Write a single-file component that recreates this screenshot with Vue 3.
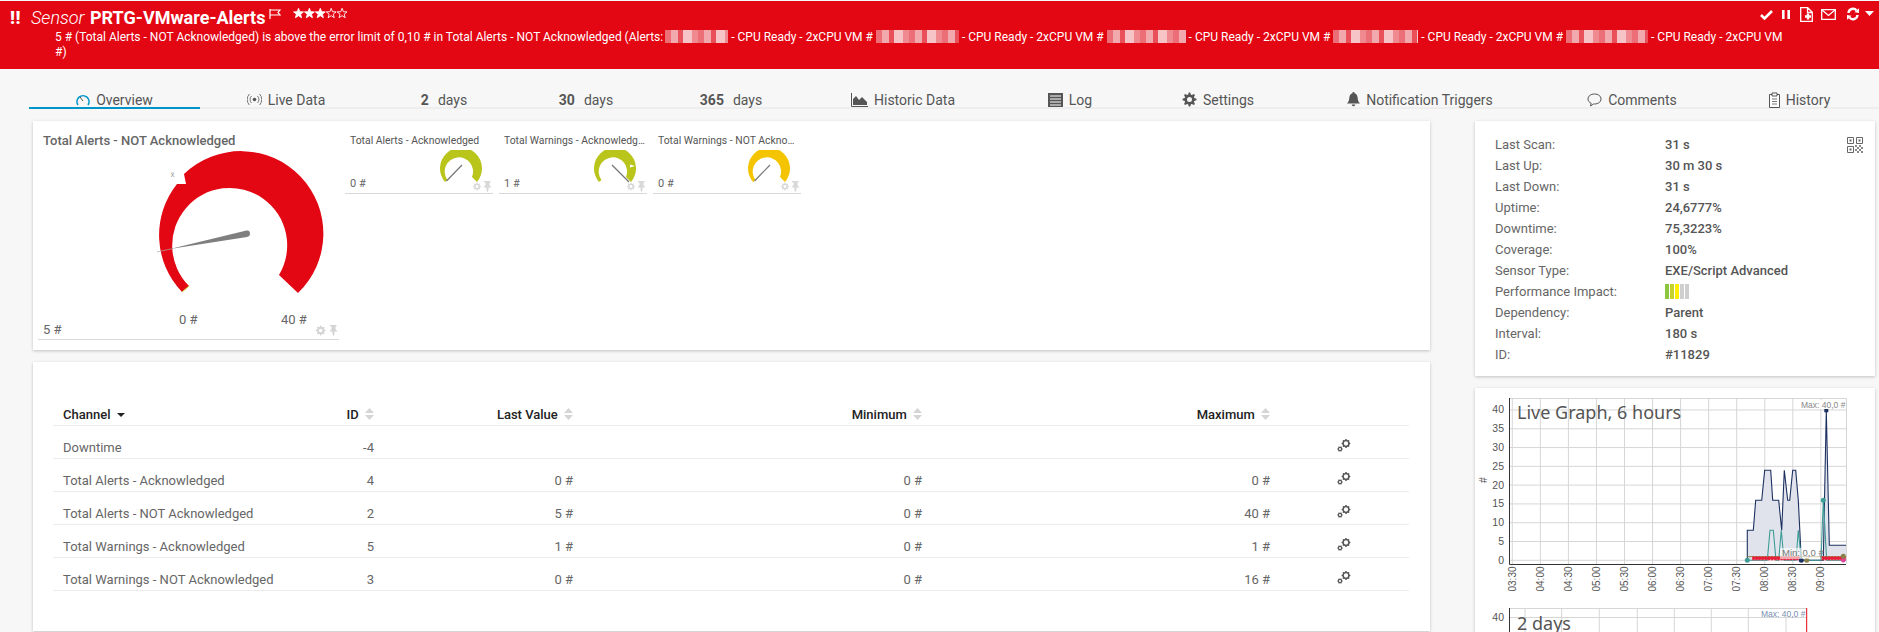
<script setup>
const gearPath = (cx, cy, ro, ri, n = 8, hole = 0.5) => {
  let d = ''
  const step = (Math.PI * 2) / (n * 4)
  for (let i = 0; i < n * 4; i++) {
    const r = i % 4 < 2 ? ro : ri
    const a = i * step - step / 2
    d += `${i ? 'L' : 'M'}${(cx + r * Math.cos(a)).toFixed(2)} ${(cy + r * Math.sin(a)).toFixed(2)}`
  }
  const h = ri * hole
  return `${d}Z M${cx - h} ${cy}a${h} ${h} 0 1 0 ${2 * h} 0a${h} ${h} 0 1 0 ${-2 * h} 0Z`
}
const pinPath = (x, y) => `M${x - 3.5} ${y - 5}h7v1.500h-1v2.500l2 2.500h-3v2.500l-1 2.500-1-2.500V${y + 1.500}h-3l2-2.500v-2.500h-1z`
const starPath = (cx, cy, r) => {
  let d = ''
  for (let i = 0; i < 10; i++) {
    const rr = i % 2 ? r * 0.42 : r
    const a = -Math.PI / 2 + (i * Math.PI) / 5
    d += `${i ? 'L' : 'M'}${(cx + rr * Math.cos(a)).toFixed(2)} ${(cy + rr * Math.sin(a)).toFixed(2)}`
  }
  return d + 'Z'
}
const stars = [0, 1, 2, 3, 4].map((i) => ({ d: starPath(5.5 + i * 10.9, 5.5, 5.2), on: i < 3 }))

const blurs = [63, 83, 79, 85, 82]

const tabs = [
  { label: 'Overview', icon: 'gauge', active: true },
  { label: 'Live Data', icon: 'radio' },
  { num: '2', label: 'days' },
  { num: '30', label: 'days' },
  { num: '365', label: 'days' },
  { label: 'Historic Data', icon: 'area' },
  { label: 'Log', icon: 'log' },
  { label: 'Settings', icon: 'gear' },
  { label: 'Notification Triggers', icon: 'bell' },
  { label: 'Comments', icon: 'comment' },
  { label: 'History', icon: 'history' }
]
const tabGear = gearPath(7.5, 7.5, 7, 5, 8)

const smallGauges = [
  { title: 'Total Alerts - Acknowledged', value: '0 #', color: '#bac51b', needle: 'M101.5 31L117 15', nx: null },
  { title: 'Total Warnings - Acknowledged', value: '1 #', color: '#bac51b', needle: 'M113 15L130 32', nx: [136, 16] },
  { title: 'Total Warnings - NOT Acknowledged', value: '0 #', color: '#f5c400', needle: 'M101.5 31L117 15', nx: [95, 18] }
]
const smallArc = 'M100 32A21 21 0 1 1 132 32L127 27A14.2 14.2 0 1 0 102.5 30Z'
const smallGear = gearPath(132, 36.5, 4, 2.9, 8)
const smallPin = pinPath(142, 36)
const mainGear = gearPath(320.7, 330.5, 5, 3.6, 8)
const mainPin = pinPath(333, 330)

const info = [
  ['Last Scan:', '31 s'],
  ['Last Up:', '30 m 30 s'],
  ['Last Down:', '31 s'],
  ['Uptime:', '24,6777%'],
  ['Downtime:', '75,3223%'],
  ['Coverage:', '100%'],
  ['Sensor Type:', 'EXE/Script Advanced'],
  ['Performance Impact:', null],
  ['Dependency:', 'Parent'],
  ['Interval:', '180 s'],
  ['ID:', '#11829']
]
const perf = ['#8dc63f', '#c6d22c', '#ffee00', '#cfcfcf', '#cfcfcf']

const heads = ['ID', 'Last Value', 'Minimum', 'Maximum']
const rows = [
  ['Downtime', '-4', '', '', ''],
  ['Total Alerts - Acknowledged', '4', '0 #', '0 #', '0 #'],
  ['Total Alerts - NOT Acknowledged', '2', '5 #', '0 #', '40 #'],
  ['Total Warnings - Acknowledged', '5', '1 #', '0 #', '1 #'],
  ['Total Warnings - NOT Acknowledged', '3', '0 #', '0 #', '16 #']
]
const bigGear = gearPath(9, 4.5, 4.4, 3.6, 8, 0.6)
const tinyGear = gearPath(3, 10, 2.8, 2.2, 6, 0.5)

// chart points are measured in the picture: px = 1470 + x / 3, py = 385 + y / 3
const px = (x) => +(1470 + x / 3).toFixed(1)
const py = (y) => +(385 + y / 3).toFixed(1)
const line = (pts) => pts.map(([x, y]) => `${px(x)},${py(y)}`).join(' ')
const navy = [[832,526],[832,436],[850,436],[857,346],[875,346],[884,256],[902,256],[908,346],[926,346],[935,436],[943,256],[953,346],[959,346],[968,256],[977,256],[985,346],[994,526],[1060,526],[1069,76],[1078,481],[1128,481]]
const teal = [[832,526],[892,526],[900,436],[910,436],[918,526],[926,526],[934,436],[942,526],[978,526],[985,436],[994,526],[1053,526],[1060,346],[1070,526],[1128,526]]
const navyLine = line(navy)
const tealLine = line(teal)
const areaPts = line([...navy, [1128, 526]])
const yTicks = [0, 5, 10, 15, 20, 25, 30, 35, 40].map((v) => ({ v, y: 560.3 - (v / 5) * 18.79 }))
const times = ['03:30', '04:00', '04:30', '05:00', '05:30', '06:00', '06:30', '07:00', '07:30', '08:00', '08:30', '09:00']
const xTicks = times.map((t, i) => ({ t, x: 1512.3 + i * 28.05 }))
const redDots = []
for (let x = 850; x < 990; x += 9.4) redDots.push(x)
for (let x = 1058; x < 1126; x += 9.4) redDots.push(x)
const x2 = [165, 275, 388, 502, 613, 724, 835, 948].map(px)
</script>

<template>
  <div class="page">
    <header class="head">
      <div class="head-top">
        <div class="title">
          <span class="bang">!!</span>
          <span class="kind">Sensor</span>
          <span class="name">PRTG-VMware-Alerts</span>
          <svg class="flag" width="13" height="10" viewBox="0 0 13 10"><path d="M1 0v10M1 1h10l-2 2.5 2 2.5H1" fill="none" stroke="#fff" stroke-width="1.2"/></svg>
          <svg class="stars" width="56" height="11" viewBox="0 0 56 11">
            <path v-for="(s, i) in stars" :key="i" :d="s.d" :fill="s.on ? '#fff' : 'none'" stroke="#fff" stroke-width=".9"/>
          </svg>
        </div>
        <div class="actions">
          <svg width="13" height="10" viewBox="0 0 13 10"><path d="M1 5l3.5 3.5L12 1" fill="none" stroke="#fff" stroke-width="2.6"/></svg>
          <svg width="8" height="9" viewBox="0 0 8 9"><path d="M0 0h2.6v9H0zM5.4 0H8v9H5.4z" fill="#fff"/></svg>
          <svg width="13" height="15" viewBox="0 0 13 15"><path d="M.7.7h7l4.6 4.6v9H.7zM7.5 1v4.5H12" fill="none" stroke="#fff" stroke-width="1.3"/><path d="M5 9.5h6M8 6.5v6" stroke="#fff" stroke-width="2.4"/></svg>
          <svg width="15" height="11" viewBox="0 0 15 11"><path d="M.7.7h13.6v9.6H.7z" fill="none" stroke="#fff" stroke-width="1.3"/><path d="M1 1l6.5 5.5L14 1" fill="none" stroke="#fff" stroke-width="1.3"/></svg>
          <svg class="gap" width="12" height="14" viewBox="0 0 12 14"><path d="M1.5 6A4.6 4.6 0 0 1 9.6 3.4M10.5 8A4.6 4.6 0 0 1 2.4 10.6" fill="none" stroke="#fff" stroke-width="2.4"/><path d="M7.5 5.2L12 6V1.2zM4.5 8.8L0 8v4.8z" fill="#fff"/></svg>
          <svg width="9" height="5" viewBox="0 0 9 5"><path d="M0 0h9L4.5 5z" fill="#fff"/></svg>
        </div>
      </div>
      <p class="msg">
        5 # (Total Alerts - NOT Acknowledged) is above the error limit of 0,10 # in Total Alerts - NOT Acknowledged (Alerts:<template v-for="(b, i) in blurs" :key="i"><span class="blur" :style="{ width: b + 'px' }"></span>{{ i < 4 ? ' - CPU Ready - 2xCPU VM # ' : ' - CPU Ready - 2xCPU VM #)' }}</template>
      </p>
    </header>

    <nav class="tabs">
      <div v-for="t in tabs" :key="t.label + t.num" class="tab" :class="{ active: t.active }">
        <svg v-if="t.icon === 'gauge'" width="14" height="13" viewBox="0 0 14 13"><path d="M2 12A6 6 0 1 1 12 12" fill="none" stroke="#0095c8" stroke-width="1.6"/><path d="M4 4l3 4" stroke="#555" stroke-width="1"/></svg>
        <svg v-else-if="t.icon === 'radio'" width="15" height="13" viewBox="0 0 15 13"><circle cx="7.5" cy="6.5" r="1.8" fill="#555"/><path d="M4.5 3a5 5 0 0 0 0 7M10.5 3a5 5 0 0 1 0 7M2.4 1a8 8 0 0 0 0 11M12.6 1a8 8 0 0 1 0 11" fill="none" stroke="#777" stroke-width="1"/></svg>
        <svg v-else-if="t.icon === 'area'" width="17" height="14" viewBox="0 0 17 14"><path d="M.5 0v13.5H17" fill="none" stroke="#555"/><path d="M2 12V6l3-3 3 4 3-3 5 5v3z" fill="#555"/></svg>
        <svg v-else-if="t.icon === 'log'" width="15" height="14" viewBox="0 0 15 14"><path d="M0 0h15v14H0z" fill="#555"/><path d="M2 3h11M2 6h11M2 9h11M2 12h11" stroke="#fff" stroke-width="1"/></svg>
        <svg v-else-if="t.icon === 'gear'" width="15" height="15" viewBox="0 0 15 15"><path :d="tabGear" fill="#555" fill-rule="evenodd"/></svg>
        <svg v-else-if="t.icon === 'bell'" width="13" height="15" viewBox="0 0 13 15"><path d="M6.5 0a1 1 0 0 1 1 1.2C10 2 10.600 4 10.800 7c.2 2 1 3.200 2.200 4.500H0C1.200 10.200 2 9 2.200 7 2.400 4 3 2 5.500 1.200a1 1 0 0 1 1-1.200zM4.700 12.500h3.600a1.800 1.800 0 0 1-3.600 0z" fill="#555"/></svg>
        <svg v-else-if="t.icon === 'comment'" width="15" height="14" viewBox="0 0 15 14"><path d="M7.500 1C11.300 1 14 3.100 14 6s-2.700 5-6.500 5H6.500L3.500 13l.7-2.700C2.300 9.500 1 8 1 6c0-2.900 2.700-5 6.500-5z" fill="none" stroke="#555"/></svg>
        <svg v-else-if="t.icon === 'history'" width="11" height="16" viewBox="0 0 11 16"><path d="M.5 2.500h10v13H.5z" fill="#fff" stroke="#555"/><path d="M3 1h5v3H3z" fill="#fff" stroke="#555"/><path d="M3 7h5M3 9.500h5M3 12h5" stroke="#777"/></svg>
        <b v-if="t.num" class="num">{{ t.num }}</b>
        <span>{{ t.label }}</span>
      </div>
    </nav>

    <main class="body">
      <section class="left">
        <div class="card gauges">
          <div class="widget main">
            <h2>Total Alerts - NOT Acknowledged</h2>
            <svg width="301" height="188" viewBox="38 151 301 188">
              <path d="M182 292A82 82 0 0 1 177 184L186 184L184 174A82 82 0 0 1 298 293L279 275A57.500 57.500 0 1 0 189 286Z" fill="#e30613"/>
              <path d="M182 292L189 286" stroke="#c8d020" stroke-width="1"/>
              <path d="M157 252L173 248.500" stroke="#aaa" stroke-width=".7"/>
              <path d="M170 249L246.500 230.500Q250 230 250 233.500Q250 236.500 247 237Z" fill="#7f7f7f"/>
              <text class="mark" x="172.500" y="177" text-anchor="middle">x̄</text>
              <text class="val" x="179" y="323.500">0 #</text>
              <text class="val" x="281" y="323.500">40 #</text>
              <text class="val" x="43" y="333.500">5 #</text>
              <path :d="mainGear" fill="#d4d4d4" fill-rule="evenodd"/>
              <path :d="mainPin" fill="#d4d4d4"/>
            </svg>
          </div>
          <div v-for="g in smallGauges" :key="g.title" class="widget small">
            <h3>{{ g.title }}</h3>
            <svg width="148" height="43" viewBox="0 0 148 43">
              <path :d="smallArc" :fill="g.color"/>
              <path v-if="g.nx" :d="`M${g.nx[0]} ${g.nx[1]}l-5 -1.500v3z`" fill="#fff"/>
              <path :d="g.needle" stroke="#777" stroke-width="1.200"/>
              <text class="val sm" x="5" y="37">{{ g.value }}</text>
              <path :d="smallGear" fill="#d8d8d8" fill-rule="evenodd"/>
              <path :d="smallPin" fill="#d8d8d8"/>
            </svg>
          </div>
        </div>

        <div class="card table">
          <div class="row thead">
            <div>Channel <svg class="caret" width="8" height="4" viewBox="0 0 8 4"><path d="M0 0h8L4 4z" fill="#222"/></svg></div>
            <div v-for="h in heads" :key="h" class="num-cell head-cell">
              {{ h }}
              <svg class="sort" width="9" height="12" viewBox="0 0 9 12"><path d="M4.500 0L9 5H0zM0 7h9L4.500 12z" fill="#d5d5d5"/></svg>
            </div>
            <div></div>
          </div>
          <div v-for="r in rows" :key="r[0]" class="row">
            <div>{{ r[0] }}</div>
            <div class="num-cell">{{ r[1] }}</div>
            <div class="num-cell">{{ r[2] }}</div>
            <div class="num-cell">{{ r[3] }}</div>
            <div class="num-cell">{{ r[4] }}</div>
            <div class="tool">
              <svg width="14" height="13" viewBox="0 0 14 13">
                <path :d="bigGear" fill="#555" fill-rule="evenodd"/>
                <path :d="tinyGear" fill="#555" fill-rule="evenodd"/>
              </svg>
            </div>
          </div>
        </div>
      </section>

      <aside class="right">
        <div class="card info">
          <dl>
            <template v-for="i in info" :key="i[0]">
              <dt>{{ i[0] }}</dt>
              <dd>
                <template v-if="i[1]">{{ i[1] }}</template>
                <span v-else class="perf"><i v-for="(c, n) in perf" :key="n" :style="{ background: c }"></i></span>
              </dd>
            </template>
          </dl>
          <svg class="qr" width="16" height="16" viewBox="0 0 16 16">
            <g fill="none" stroke="#666" stroke-width="1"><path d="M.5.500h6v6h-6zM9.500.500h6v6h-6zM.5 9.500h6v6h-6z"/></g>
            <path d="M2.500 2.500h2v2h-2zM11.500 2.500h2v2h-2zM2.500 11.500h2v2h-2z" fill="#666"/>
            <path d="M8 8h2v2H8zM12 8h2v2h-2zM10 10h2v2h-2zM14 10h2v2h-2zM8 12h2v2H8zM12 12h2v2h-2zM10 14h2v2h-2zM14 14h2v2h-2z" fill="#888"/>
          </svg>
        </div>

        <div class="card chart">
          <svg width="400" height="244" viewBox="1475 388 400 244">
            <g stroke="#d6d6d6" stroke-width="1" fill="none">
              <path d="M1509 398.500H1846.500V564"/>
              <line v-for="t in yTicks" :key="t.v" x1="1509" x2="1846" :y1="t.y" :y2="t.y"/>
              <line v-for="t in xTicks" :key="t.t" :x1="t.x" :x2="t.x" y1="398" y2="564"/>
            </g>
            <polygon :points="areaPts" fill="#e0e3ec"/>
            <polyline :points="navyLine" fill="none" stroke="#1d3160" stroke-width="1.100"/>
            <polyline :points="tealLine" fill="none" stroke="#3f9c97" stroke-width="1.100"/>
            <path :d="`M${px(832)} ${py(515)}H${px(1128)}`" stroke="#8a8048" stroke-width="1"/>
            <path :d="`M${px(848)} ${py(520)}H${px(990)}M${px(1056)} ${py(520)}H${px(1126)}`" stroke="#e8203a" stroke-width="2.400"/>
            <rect v-for="x in redDots" :key="x" :x="px(x) - 1" :y="py(520) - 2" width="2" height="4" fill="#e8203a"/>
            <circle :cx="px(832)" :cy="py(526)" r="2.500" fill="#3f9c97"/>
            <circle :cx="px(994)" :cy="py(526)" r="2.500" fill="#1d3160"/>
            <circle :cx="px(1010)" :cy="py(526)" r="2.500" fill="#8a8048"/>
            <circle :cx="px(1060)" :cy="py(346)" r="2.500" fill="#3f9c97"/>
            <rect :x="px(1069) - 2" :y="py(76) - 2" width="4" height="4" fill="#1d3160"/>
            <circle :cx="px(1120)" :cy="py(526)" r="2.200" fill="#e8409a"/>
            <circle :cx="px(1120)" :cy="py(514)" r="2.500" fill="#8a8048"/>
            <path d="M1509.500 398V564.500H1846" fill="none" stroke="#333" stroke-width="1"/>
            <rect x="1800" y="400" width="45" height="9" fill="#fff"/>
            <text class="tip" x="1801" y="407.500">Max: 40,0 #</text>
            <rect x="1780" y="548" width="40" height="11" fill="#fff" opacity=".6"/>
            <text class="tip low" x="1782" y="556">Min: 0,0 #</text>
            <text class="chart-title" x="1517" y="419">Live Graph, 6 hours</text>
            <text v-for="t in yTicks" :key="'l' + t.v" class="axis" x="1504" :y="t.y + 3.500" text-anchor="end">{{ t.v }}</text>
            <text v-for="t in xTicks" :key="'x' + t.t" class="axis xt" :transform="`translate(${t.x + 3.500} 591.500) rotate(-90)`">{{ t.t }}</text>
            <text class="axis" text-anchor="middle" transform="translate(1487 480) rotate(-90)">#</text>

            <g stroke="#d6d6d6" stroke-width="1" fill="none">
              <path d="M1509 608.500H1806M1509 617.500H1806"/>
              <line v-for="x in x2" :key="x" :x1="x" :x2="x" y1="608" y2="632"/>
            </g>
            <rect x="1759" y="609" width="46" height="8" fill="#fff"/>
            <path d="M1509.500 608V632" stroke="#333"/>
            <path d="M1806.700 608V632" stroke="#e30613" stroke-width="1"/>
            <text class="tip blue" x="1761" y="617">Max: 40,0 #</text>
            <text class="axis" x="1504" y="621" text-anchor="end">40</text>
            <text class="chart-title" x="1517" y="630">2 days</text>
          </svg>
        </div>
      </aside>
    </main>
  </div>
</template>

<style>
html, body { margin: 0; background: #f7f7f7; overflow: hidden; }
</style>

<style scoped>
.page {
  height: 632px;
  overflow: hidden;
  background: #f7f7f7;
  font-family: Roboto, "Liberation Sans", sans-serif;
  color: #666;
  padding-top: 1px;
  box-sizing: border-box;
}
.head { height: 68px; background: #e30613; color: #fff; }
.head-top { display: flex; justify-content: space-between; height: 29px; padding: 0 5px 0 10px; }
.title { display: flex; align-items: flex-start; line-height: 20px; padding-top: 7px; }
.bang { font-size: 18px; font-weight: 900; width: 21px; letter-spacing: .5px; }
.kind { font-size: 18px; font-style: italic; font-weight: 300; width: 59px; }
.name { font-size: 18px; font-weight: 700; }
.flag { margin: 1px 0 0 4px; }
.stars { margin: 0 0 0 11px; }
.actions { display: flex; gap: 8px; padding-top: 6px; align-items: flex-start; }
.actions svg { margin-top: 3px; }
.actions svg:nth-child(2) { margin-top: 3px; margin-left: 1px; }
.actions svg:nth-child(3) { margin: 0 0 0 2px; }
.actions svg:nth-child(4) { margin: 2px 0 0 0; }
.actions svg:nth-child(5) { margin: 0 0 0 3px; }
.actions svg:nth-child(6) { margin: 4px 0 0 -2px; }
.msg { margin: 0 0 0 55px; width: 1732px; font-size: 12px; line-height: 15px; font-weight: 400; padding-top: 0; }
.blur {
  display: inline-block;
  height: 13px;
  vertical-align: -2px;
  background: repeating-linear-gradient(90deg, #ec6f78 0 6px, #f2a9ae 6px 13px, #e9505a 13px 18px, #f6c4c7 18px 27px, #ef8a91 27px 33px);
}
.blur:first-of-type { margin-left: 2px; }
.tabs {
  display: grid;
  grid-template-columns: 171px 172px 144px 140px 150px 194px 140px 156px 248px 176px 1fr;
  margin: 11px 0 12px 29px;
  height: 29px;
}
.tab {
  display: flex;
  justify-content: center;
  align-items: center;
  gap: 6px;
  padding-top: 12px;
  box-sizing: border-box;
  height: 29px;
  border-bottom: 2px solid #eeeeee;
  font-size: 14px;
  color: #555;
}
.tab.active { border-bottom-color: #0095c8; }
.tab .num { font-weight: 700; margin-right: 3px; }
.body { display: flex; padding-left: 33px; gap: 45px; }
.card { background: #fff; box-shadow: 0 1px 3px rgba(0, 0, 0, .22); }
.left { width: 1397px; display: flex; flex-direction: column; gap: 12px; }
.right { width: 400px; display: flex; flex-direction: column; gap: 12px; }
.gauges { height: 229px; box-sizing: border-box; display: flex; gap: 6px; padding: 10px 0 0 5px; align-items: flex-start; }
.widget svg { display: block; }
.widget { border-bottom: 1px solid #d9d9d9; }
.main { width: 301px; }
.small { width: 148px; }
.main h2 { margin: 0; padding-left: 5px; font-size: 13px; line-height: 20px; font-weight: 500; color: #666; }
.small h3 {
  margin: 0;
  padding-left: 5px;
  font-size: 10.400px;
  line-height: 19px;
  font-weight: 400;
  color: #555;
  white-space: nowrap;
  overflow: hidden;
  text-overflow: ellipsis;
}
.val { font-family: Roboto, sans-serif; font-size: 13px; fill: #666; }
.val.sm { font-size: 11px; }
.mark { font-family: Roboto, sans-serif; font-size: 8px; fill: #999; }
.table { height: 269px; box-sizing: border-box; padding: 31px 21px 0 20px; }
.row {
  display: grid;
  grid-template-columns: 237px 74px 199px 349px 348px 1fr;
  height: 33px;
  box-sizing: border-box;
  padding: 14px 0 0 10px;
  border-bottom: 1px solid #ececec;
  font-size: 13px;
  line-height: 15px;
  color: #666;
}
.thead { color: #222; font-weight: 500; }
.num-cell { text-align: right; }
.caret { margin-left: 3px; vertical-align: 2px; }
.sort { margin-left: 3px; vertical-align: -1px; }
.tool { padding-left: 67px; }
.tool svg { display: block; margin-top: -1px; }
.info { height: 255px; box-sizing: border-box; display: flex; justify-content: space-between; padding: 13px 12px 0 20px; }
dl { margin: 0; display: grid; grid-template-columns: 170px 1fr; grid-auto-rows: 20.97px; font-size: 13px; line-height: 21px; }
dt { color: #666; }
dd { margin: 0; color: #555; font-weight: 500; }
.perf { display: flex; gap: 1px; padding-top: 3px; }
.perf i { width: 4px; height: 15px; display: block; }
.qr { margin-top: 3px; }
.chart { height: 300px; }
.chart svg { display: block; }
.chart-title { font-family: "Noto Sans", sans-serif; font-size: 18px; fill: #555; }
.axis { font-family: "Liberation Sans", sans-serif; font-size: 10.500px; fill: #555; }
.axis.xt { font-size: 10px; }
.tip { font-family: "Liberation Sans", sans-serif; font-size: 8.500px; fill: #888; }
.tip.low { font-size: 9.500px; fill: #777; }
.tip.blue { fill: #7a8fb0; }
</style>
